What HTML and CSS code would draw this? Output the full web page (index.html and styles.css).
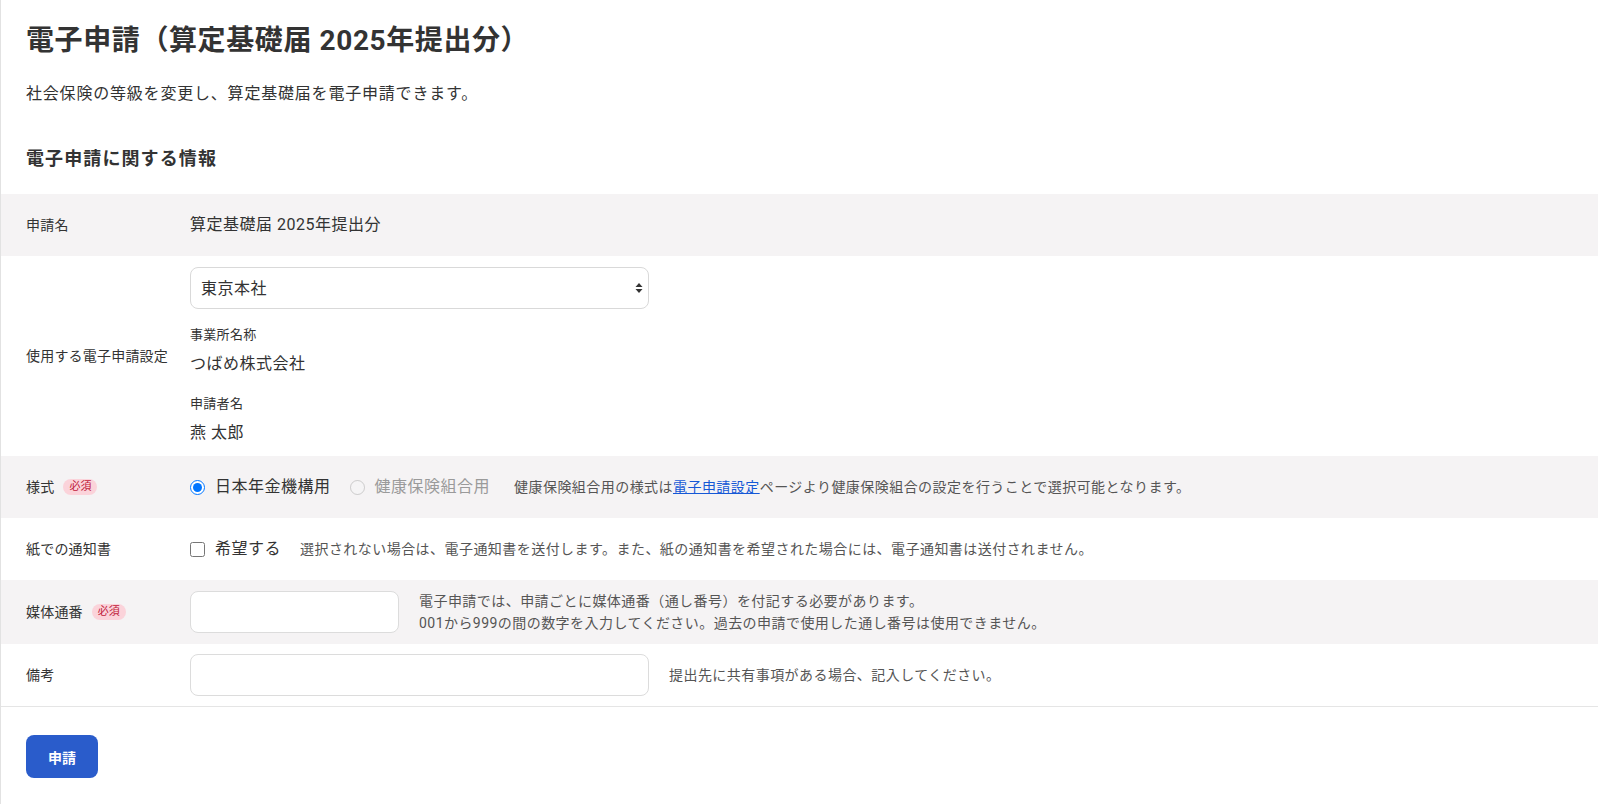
FILE: index.html
```html
<!DOCTYPE html>
<html lang="ja">

<head>
    <meta charset="UTF-8">
    <meta name="viewport" content="width=device-width, initial-scale=1.0">
    <title>電子申請（算定基礎届 2025年提出分）</title>
    <link rel="stylesheet" href="styles.css">
</head>

<body>
    <div class="page">
        <div class="intro">
            <h1>電子申請（算定基礎届 2025年提出分）</h1>
            <p class="lead">社会保険の等級を変更し、算定基礎届を電子申請できます。</p>
            <h2>電子申請に関する情報</h2>
        </div>

        <div class="form-table">
            <div class="row shaded">
                <div class="label">申請名</div>
                <div class="value">算定基礎届 2025年提出分</div>
            </div>

            <div class="row tall">
                <div class="label">使用する電子申請設定</div>
                <div class="value stack">
                    <div class="select-wrap">
                        <select class="select">
                            <option>東京本社</option>
                        </select>
                        <svg class="select-arrow" width="8" height="12" viewBox="0 0 8 12">
                            <path d="M4 1 L7.5 5 H0.5 Z M4 11 L0.5 7 H7.5 Z" fill="#333" />
                        </svg>
                    </div>
                    <div class="field">
                        <div class="field-name">事業所名称</div>
                        <div class="field-text">つばめ株式会社</div>
                    </div>
                    <div class="field">
                        <div class="field-name">申請者名</div>
                        <div class="field-text">燕 太郎</div>
                    </div>
                </div>
            </div>

            <div class="row shaded">
                <div class="label">様式 <span class="badge">必須</span></div>
                <div class="value inline">
                    <label class="choice"><input type="radio" name="form" checked> 日本年金機構用</label>
                    <label class="choice disabled"><input type="radio" name="form" disabled> 健康保険組合用</label>
                    <span class="hint">健康保険組合用の様式は<a href="#">電子申請設定</a>ページより健康保険組合の設定を行うことで選択可能となります。</span>
                </div>
            </div>

            <div class="row">
                <div class="label">紙での通知書</div>
                <div class="value inline">
                    <label class="choice"><input type="checkbox"> 希望する</label>
                    <span class="hint">選択されない場合は、電子通知書を送付します。また、紙の通知書を希望された場合には、電子通知書は送付されません。</span>
                </div>
            </div>

            <div class="row shaded">
                <div class="label">媒体通番 <span class="badge">必須</span></div>
                <div class="value inline">
                    <input type="text" class="text-input short">
                    <span class="hint">電子申請では、申請ごとに媒体通番（通し番号）を付記する必要があります。<br>001から999の間の数字を入力してください。過去の申請で使用した通し番号は使用できません。</span>
                </div>
            </div>

            <div class="row">
                <div class="label">備考</div>
                <div class="value inline">
                    <input type="text" class="text-input long">
                    <span class="hint">提出先に共有事項がある場合、記入してください。</span>
                </div>
            </div>
        </div>

        <div class="actions">
            <button class="submit">申請</button>
        </div>
    </div>
</body>

</html>
```

FILE: styles.css
```css
/* Reset some default styles */
* {
    margin: 0;
    padding: 0;
    box-sizing: border-box;
}

body {
    background-color: #fff;
    color: #333;
    font-family: Roboto, "Noto Sans CJK JP", sans-serif;
    text-spacing-trim: space-all;
}

.page {
    min-height: 804px;
    border-left: 1px solid #e2e2e2;
}

.intro {
    padding: 21px 25px 22px;
}

h1 {
    font-size: 28px;
    line-height: 40px;
    font-weight: bold;
    letter-spacing: 0.6px;
}

.lead {
    margin-top: 21px;
    font-size: 16px;
    line-height: 24px;
    letter-spacing: 0.8px;
}

h2 {
    margin-top: 40px;
    font-size: 18px;
    line-height: 26px;
    font-weight: bold;
    letter-spacing: 1.1px;
}

.form-table {
    border-bottom: 1px solid #e5e5e5;
}

.row {
    display: flex;
    align-items: center;
    min-height: 62px;
    padding: 10px 25px;
}

.row.shaded {
    background-color: #f5f3f4;
}

.row.tall {
    padding: 11px 25px;
}

.label {
    flex: 0 0 164px;
    display: flex;
    align-items: center;
    gap: 9px;
    font-size: 14px;
    line-height: 20px;
    letter-spacing: 0.2px;
}

.badge {
    display: inline-block;
    height: 16px;
    padding: 0 6px;
    border-radius: 8px;
    background-color: #fbd3da;
    color: #c0203a;
    font-size: 11px;
    line-height: 16px;
    letter-spacing: 0;
}

.value {
    font-size: 16px;
    line-height: 24px;
    letter-spacing: 0.5px;
}

.value.stack {
    display: flex;
    flex-direction: column;
}

.value.inline {
    display: flex;
    align-items: center;
}

.select-wrap {
    position: relative;
    width: 459px;
}

.select {
    appearance: none;
    width: 100%;
    height: 42px;
    padding: 0 10px;
    border: 1px solid #d9d9d9;
    border-radius: 8px;
    background-color: #fff;
    color: #333;
    font-family: inherit;
    font-size: 16px;
    letter-spacing: 0.5px;
}

.select-arrow {
    position: absolute;
    right: 6px;
    top: 15px;
}

.field {
    margin-top: 16px;
}

.field+.field {
    margin-top: 18px;
}

.field-name {
    font-size: 13px;
    line-height: 20px;
    letter-spacing: 0.3px;
}

.field-text {
    margin-top: 7px;
    font-size: 16px;
    line-height: 24px;
}

.choice {
    display: flex;
    align-items: center;
    gap: 10px;
    margin-right: 19px;
    font-size: 16px;
}

.choice input {
    width: 15px;
    height: 15px;
    margin: 0;
}

.choice.disabled {
    color: #9a9a9a;
    margin-right: 24px;
}

.hint {
    font-size: 14px;
    line-height: 22px;
    letter-spacing: 0.45px;
    color: #555;
}

.hint a {
    color: #1558d6;
}

.text-input {
    height: 42px;
    margin-right: 20px;
    border: 1px solid #dcdcdc;
    border-radius: 8px;
    background-color: #fff;
    font-size: 16px;
    padding: 0 10px;
}

.text-input.short {
    width: 209px;
}

.text-input.long {
    width: 459px;
}

.actions {
    padding: 28px 25px;
}

.submit {
    width: 72px;
    height: 43px;
    border: none;
    border-radius: 8px;
    background-color: #2a5ccb;
    color: #fff;
    font-family: inherit;
    font-size: 14px;
    font-weight: bold;
    cursor: pointer;
}
```
